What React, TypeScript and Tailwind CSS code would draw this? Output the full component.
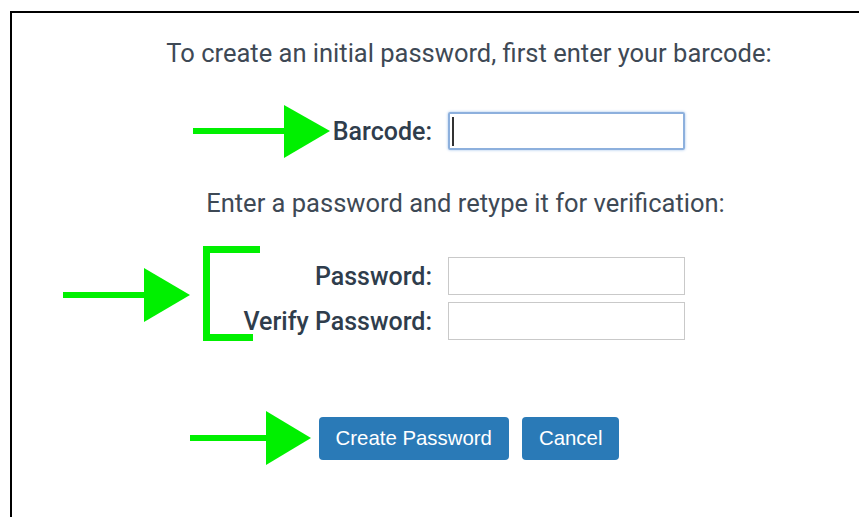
import React from 'react';

const labelCls =
  'w-[200px] text-right text-[25px] font-medium text-[#2f3d4c] leading-none whitespace-nowrap';

const FieldRow: React.FC<{ label: string; children: React.ReactNode }> = ({ label, children }) => (
  <div className="flex items-center gap-4">
    <label className={labelCls}>{label}</label>
    <div className="w-[258px]">{children}</div>
  </div>
);

// green callout arrows drawn over the form
const Callouts: React.FC = () => (
  <svg className="absolute inset-0 pointer-events-none" width="859" height="517" viewBox="0 0 859 517">
    <g fill="#00f000">
      <rect x="193" y="128" width="95" height="6" />
      <polygon points="284,105 330,131 284,158" />

      <rect x="63" y="292" width="84" height="6" />
      <polygon points="144,268 190,295 144,322" />
      <rect x="203" y="246" width="7" height="95" />
      <rect x="203" y="246" width="57" height="7" />
      <rect x="203" y="334" width="50" height="7" />

      <rect x="190" y="435" width="80" height="6" />
      <polygon points="266,411 311,438 266,465" />
    </g>
  </svg>
);

export default function App() {
  return (
    <div className="relative w-[859px] h-[517px] overflow-hidden bg-white" style={{ fontFamily: 'Roboto, "Liberation Sans", sans-serif' }}>
      <div className="ml-[10px] mt-[11px] w-[916px] h-[520px] border-l-2 border-t-2 border-black flex flex-col items-center">
        <p className="mt-[25px] text-[25.5px] leading-[30px] text-[#3e4955] whitespace-nowrap">
          To create an initial password, first enter your barcode:
        </p>

        <div className="mt-[44px]">
          <FieldRow label="Barcode:">
            <div className="flex items-center h-[38px] w-[237px] border-2 border-[#8db0dd] rounded-[2px] shadow-[0_0_3px_#9fc0ea] px-[2px]">
              <span className="w-[2px] h-[29px] bg-[#333]" />
              <input type="text" className="flex-1 min-w-0 h-full outline-none bg-transparent" />
            </div>
          </FieldRow>
        </div>

        <p className="mt-[38px] mr-[7px] text-[25.5px] leading-[30px] text-[#3e4955] whitespace-nowrap">
          Enter a password and retype it for verification:
        </p>

        <div className="mt-[39px] flex flex-col gap-[7px]">
          <FieldRow label="Password:">
            <input type="password" className="block h-[38px] w-[237px] border border-[#c9c9c9] outline-none" />
          </FieldRow>
          <FieldRow label="Verify Password:">
            <input type="password" className="block h-[38px] w-[237px] border border-[#c9c9c9] outline-none" />
          </FieldRow>
        </div>

        <div className="mt-[77px] flex gap-[13px]" style={{ fontFamily: '"Liberation Sans", Arial, sans-serif' }}>
          <button className="h-[43px] px-[17px] rounded-[4px] bg-[#2a7ab7] text-white text-[20.4px]">
            Create Password
          </button>
          <button className="h-[43px] px-[17px] rounded-[4px] bg-[#2a7ab7] text-white text-[20.4px]">
            Cancel
          </button>
        </div>
      </div>
      <Callouts />
    </div>
  );
}
